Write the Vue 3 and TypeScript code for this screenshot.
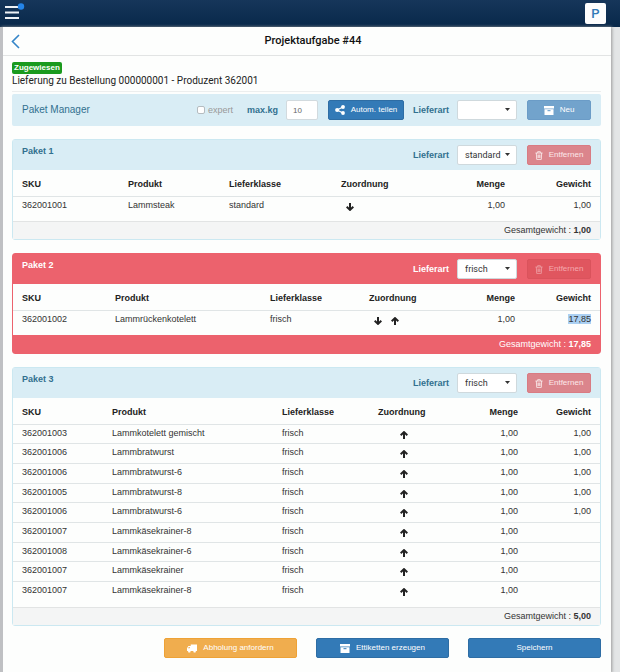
<script setup lang="ts">
import { ref } from 'vue'

interface Item {
  sku: string
  product: string
  shipping: string
  down: boolean
  up: boolean
  amount: string
  weight: string
}

interface Parcel {
  id: number
  kind: string
  alert: boolean
  columns: number[]
  items: Item[]
  total: string
}

const kinds: string[] = ['standard', 'frisch']

function upItem(sku: string, product: string, weight: string): Item {
  return { sku, product, shipping: 'frisch', down: false, up: true, amount: '1,00', weight }
}

const parcels = ref<Parcel[]>([
  {
    id: 1,
    kind: 'standard',
    alert: false,
    columns: [115, 101, 112, 90, 74, 95],
    items: [
      { sku: '362001001', product: 'Lammsteak', shipping: 'standard', down: true, up: false, amount: '1,00', weight: '1,00' },
    ],
    total: '1,00',
  },
  {
    id: 2,
    kind: 'frisch',
    alert: true,
    columns: [102, 155, 99, 76, 70, 85],
    items: [
      { sku: '362001002', product: 'Lammrückenkotelett', shipping: 'frisch', down: true, up: true, amount: '1,00', weight: '17,85' },
    ],
    total: '17,85',
  },
  {
    id: 3,
    kind: 'frisch',
    alert: false,
    columns: [99, 170, 96, 70, 70, 82],
    items: [
      upItem('362001003', 'Lammkotelett gemischt', '1,00'),
      upItem('362001006', 'Lammbratwurst', '1,00'),
      upItem('362001006', 'Lammbratwurst-6', '1,00'),
      upItem('362001005', 'Lammbratwurst-8', '1,00'),
      upItem('362001006', 'Lammbratwurst-6', '1,00'),
      upItem('362001007', 'Lammkäsekrainer-8', ''),
      upItem('362001008', 'Lammkäsekrainer-6', ''),
      upItem('362001007', 'Lammkäsekrainer', ''),
      upItem('362001007', 'Lammkäsekrainer-8', ''),
    ],
    total: '5,00',
  },
])

const expert = ref(false)
const maxKg = ref('10')
const newKind = ref('')

function share(part: number, columns: number[]): string {
  return (100 * part) / columns.reduce((sum, c) => sum + c, 0) + '%'
}
</script>

<template>
  <div class="page">
    <header class="topbar">
      <button class="menu" type="button" aria-label="Menü">
        <svg viewBox="0 0 21 19" width="21" height="19">
          <path d="M0 5h14M0 10.500h14M0 16h14" stroke="#eef2f6" stroke-width="2" />
          <circle cx="16" cy="4.500" r="3.200" fill="#2484e8" />
        </svg>
      </button>
      <button class="avatar" type="button">P</button>
    </header>

    <main class="sheet">
      <div class="titlebar">
        <a class="back" href="#" aria-label="Zurück">
          <svg viewBox="0 0 10 15" width="10" height="15">
            <path d="M8 1 1.500 7.500 8 14" fill="none" stroke="#3585c8" stroke-width="1.600" />
          </svg>
        </a>
        <h1>Projektaufgabe #44</h1>
      </div>

      <div class="content">
        <div class="intro">
          <span class="badge">Zugewiesen</span>
          <p>Lieferung zu Bestellung 000000001 - Produzent 362001</p>
        </div>

        <section class="manager">
          <h2>Paket Manager</h2>
          <label class="expert"><input v-model="expert" type="checkbox" />expert</label>
          <label class="strong maxkg" for="maxkg">max.kg</label>
          <input id="maxkg" v-model="maxKg" class="kg" type="text" />
          <button class="btn primary split" type="button">
            <svg viewBox="0 0 10 10" width="10" height="10">
              <path d="M8 2 2 5l6 3" fill="none" stroke="#fff" stroke-width="1.200" />
              <circle cx="8" cy="2" r="1.900" fill="#fff" />
              <circle cx="2.100" cy="5" r="2" fill="#fff" />
              <circle cx="8" cy="8" r="1.900" fill="#fff" />
            </svg>
            Autom. teilen
          </button>
          <label class="strong" for="kind-new">Lieferart</label>
          <span class="pick">
            <select id="kind-new" v-model="newKind">
              <option value=""></option>
              <option v-for="k in kinds" :key="k">{{ k }}</option>
            </select>
            <svg class="caret" viewBox="0 0 5 3" width="5" height="3"><path d="M0 0h5L2.500 3z" fill="#333" /></svg>
          </span>
          <button class="btn primary side" type="button" disabled>
            <svg viewBox="0 0 10 9" width="10" height="9">
              <path d="M0 0h10v2.500H0zM.5 3.200h9V9h-9z" fill="#fff" />
              <path d="M3.500 4.700h3" stroke="#5b95c8" stroke-width="1" />
            </svg>
            Neu
          </button>
        </section>

        <section v-for="parcel in parcels" :key="parcel.id" class="panel" :class="{ alert: parcel.alert }">
          <div class="head">
            <h3>Paket {{ parcel.id }}</h3>
            <label class="strong" :for="'kind-' + parcel.id">Lieferart</label>
            <span class="pick">
              <select :id="'kind-' + parcel.id" v-model="parcel.kind">
                <option v-for="k in kinds" :key="k">{{ k }}</option>
              </select>
              <svg class="caret" viewBox="0 0 5 3" width="5" height="3"><path d="M0 0h5L2.500 3z" fill="#333" /></svg>
            </span>
            <button class="btn danger side" type="button" disabled>
              <svg viewBox="0 0 9 10" width="8" height="9">
                <path
                  d="M.5 2.200h8M3 2V.7h3V2M1.500 2.200l.4 7.200h5.200l.4-7.200M3.400 4v3.800M4.500 4v3.800M5.600 4v3.800"
                  fill="none"
                  stroke="#fff"
                  stroke-width=".800"
                />
              </svg>
              Entfernen
            </button>
          </div>

          <table>
            <colgroup>
              <col v-for="(c, i) in parcel.columns" :key="i" :style="{ width: share(c, parcel.columns) }" />
            </colgroup>
            <thead>
              <tr>
                <th>SKU</th>
                <th>Produkt</th>
                <th>Lieferklasse</th>
                <th>Zuordnung</th>
                <th class="num">Menge</th>
                <th class="num">Gewicht</th>
              </tr>
            </thead>
            <tbody>
              <tr v-for="(item, i) in parcel.items" :key="i">
                <td>{{ item.sku }}</td>
                <td>{{ item.product }}</td>
                <td>{{ item.shipping }}</td>
                <td>
                  <div class="moves">
                    <button v-if="item.down" class="move" type="button" aria-label="Nach unten">
                      <svg viewBox="0 0 8 8" width="8" height="8">
                        <path d="M4 0v6M.7 3.700 4 6.900l3.300-3.200" fill="none" stroke="#222" stroke-width="2" />
                      </svg>
                    </button>
                    <button v-if="item.up" class="move up" type="button" aria-label="Nach oben">
                      <svg viewBox="0 0 8 8" width="8" height="8">
                        <path d="M4 8V2M.7 4.300 4 1.100l3.300 3.200" fill="none" stroke="#222" stroke-width="2" />
                      </svg>
                    </button>
                  </div>
                </td>
                <td class="num">{{ item.amount }}</td>
                <td class="num"><mark v-if="parcel.alert">{{ item.weight }}</mark><template v-else>{{ item.weight }}</template></td>
              </tr>
            </tbody>
          </table>

          <div class="foot">Gesamtgewicht : <b>{{ parcel.total }}</b></div>
        </section>

        <div class="actions">
          <button class="btn warning" type="button">
            <svg viewBox="0 0 10 9" width="10" height="9">
              <path d="M3.700.5H10V7H3.700zM0 7V4.200l1.400-2.200h2.500v5z" fill="#fff" />
              <circle cx="2.300" cy="7.400" r="1.200" fill="#fff" />
              <circle cx="7.600" cy="7.400" r="1.200" fill="#fff" />
              <path d="M.9 4.300 1.900 2.900h.9v1.400z" fill="#f0ad4e" />
            </svg>
            Abholung anfordern
          </button>
          <button class="btn primary" type="button">
            <svg viewBox="0 0 10 9" width="10" height="9">
              <path d="M0 0h10v2.500H0zM.5 3.200h9V9h-9z" fill="#fff" />
              <path d="M3.500 4.700h3" stroke="#337ab7" stroke-width="1" />
            </svg>
            Ettiketten erzeugen
          </button>
          <button class="btn primary" type="button">Speichern</button>
        </div>
      </div>
    </main>
  </div>
</template>

<style>
body {
  margin: 0;
  background: #e3e5e6;
}
</style>

<style scoped>
.page {
  display: flex;
  flex-direction: column;
  min-height: 100vh;
  box-sizing: border-box;
  font: 9px/12px 'Liberation Sans', Arial, sans-serif;
  color: #333;
}
h1, h2, h3, p {
  margin: 0;
}
button, input, select {
  box-sizing: border-box;
  margin: 0;
  font-family: inherit;
}
svg {
  display: block;
  flex: none;
}
.topbar {
  display: flex;
  align-items: center;
  justify-content: space-between;
  height: 27px;
  padding: 0 14px 0 5px;
  box-sizing: border-box;
  background: linear-gradient(#16365a, #08284a);
}
.menu {
  padding: 0;
  margin-bottom: 4px;
  border: 0;
  background: none;
}
.avatar {
  width: 21px;
  height: 21px;
  padding: 0;
  border: 0;
  border-radius: 2px;
  background: #fdfdfd;
  color: #337ab7;
  font: 500 13px/21px Roboto, sans-serif;
}
.sheet {
  flex: 1;
  margin: 0 9px 0 0;
  border-left: 3px solid #bfc0c3;
  background: #fdfefd;
  box-shadow: 1px 0 3px #999;
}
.titlebar {
  display: grid;
  grid-template-columns: 24px 1fr 12px;
  align-items: center;
  height: 29px;
  padding: 0 8px;
  box-sizing: border-box;
  border-bottom: 1px solid #e2e4e4;
}
.titlebar h1 {
  text-align: center;
  font: 500 11px/14px Roboto, sans-serif;
  color: #111;
}
.content {
  padding: 6px 10px 15px 9px;
}
.intro {
  padding-bottom: 4px;
  border-bottom: 1px solid #eceeee;
}
.badge {
  display: block;
  width: fit-content;
  padding: 0 2px;
  border-radius: 2px;
  background: #1a9a1e;
  color: #fff;
  font-size: 8px;
  font-weight: 700;
  line-height: 12px;
}
.intro p {
  font: 10px/13px Roboto, sans-serif;
  color: #222;
}
.manager {
  display: flex;
  align-items: center;
  height: 32px;
  margin-top: 2px;
  padding: 0 10px;
  border-radius: 2px;
  background: #d9edf5;
}
.manager h2 {
  flex: 1;
  font-size: 10px;
  font-weight: 400;
  color: #31708f;
}
.expert {
  display: flex;
  align-items: center;
  gap: 3px;
  color: #999;
}
.expert input {
  appearance: none;
  width: 8px;
  height: 8px;
  border: 1px solid #b5bcc0;
  border-radius: 2px;
  background: #fff;
}
.strong {
  font-weight: 700;
  color: #31708f;
}
.maxkg {
  margin: 0 8px 0 14px;
}
.kg {
  width: 32px;
  height: 20px;
  padding: 0 6px;
  border: 1px solid #d2dade;
  border-radius: 2px;
  background: #fff;
  color: #666;
  font-size: 8px;
}
.btn {
  display: flex;
  align-items: center;
  justify-content: center;
  gap: 6px;
  height: 20px;
  padding: 0;
  border: 1px solid transparent;
  border-radius: 2px;
  color: #fff;
  font-size: 8px;
  line-height: 12px;
  white-space: nowrap;
}
.primary {
  background: #337ab7;
  border-color: #2e6da4;
}
.primary:disabled {
  background: #72a3cc;
  border-color: #6b9cc7;
}
.danger:disabled {
  background: #db858c;
  border-color: #d97b83;
  color: #fbe8ea;
}
.warning {
  background: #f0ad4e;
  border-color: #eea236;
}
.split {
  width: 76px;
  margin: 0 9px 0 10px;
}
.side {
  width: 64px;
}
.pick {
  position: relative;
  width: 60px;
  margin: 0 10px 0 8px;
}
.pick select {
  display: block;
  appearance: none;
  width: 100%;
  height: 20px;
  padding: 0 7px;
  border: 1px solid #cfd9dd;
  border-radius: 2px;
  background: #fff;
  color: #333;
  font: 9px/12px Roboto, sans-serif;
}
.caret {
  position: absolute;
  top: 8px;
  right: 7px;
  pointer-events: none;
}
.panel {
  margin-top: 13px;
  border: 1px solid #cbe8f1;
  border-radius: 3px;
}
.head {
  display: flex;
  align-items: center;
  height: 30px;
  padding: 0 9px;
  background: #d9edf5;
}
.head h3 {
  flex: 1;
  padding-bottom: 8px;
  font-size: 9px;
  color: #31708f;
}
table {
  width: 100%;
  table-layout: fixed;
  border-collapse: collapse;
  margin-bottom: 6px;
}
th, td {
  padding: 0;
  text-align: left;
  white-space: nowrap;
  line-height: 12px;
}
th {
  padding-top: 2px;
  height: 24px;
  color: #222;
}
td {
  padding-bottom: 3px;
  height: 16px;
  border-top: 1px solid #e0e5e6;
}
tbody tr:nth-child(3n + 1) td {
  height: 15px;
}
th:first-child, td:first-child {
  padding-left: 9px;
}
th:last-child, td:last-child {
  padding-right: 9px;
}
.num {
  text-align: right;
}
.moves {
  display: grid;
  grid-template-columns: 17px 17px;
  height: 12px;
}
.move {
  display: flex;
  align-items: flex-end;
  justify-content: center;
  height: 12px;
  padding: 0;
  border: 0;
  background: none;
}
.up {
  grid-column: 2;
}
mark {
  background: #abd0f2;
  color: inherit;
}
.foot {
  height: 17px;
  padding: 0 9px;
  border-top: 1px solid #e2e4e4;
  background: #f4f5f5;
  text-align: right;
  line-height: 17px;
}
.alert {
  border-color: #ec626d;
}
.alert .head, .alert .foot {
  background: #ec626d;
  border-color: #ec626d;
  color: #fff;
}
.alert h3, .alert .strong {
  color: #fff;
}
.alert .danger:disabled {
  background: #e0565f;
  border-color: #da535c;
  color: #f5a9ae;
}
.alert .danger svg {
  opacity: 0.5;
}
.actions {
  display: grid;
  grid-template-columns: repeat(3, 133px);
  justify-content: end;
  gap: 19px;
  margin-top: 12px;
}
</style>
